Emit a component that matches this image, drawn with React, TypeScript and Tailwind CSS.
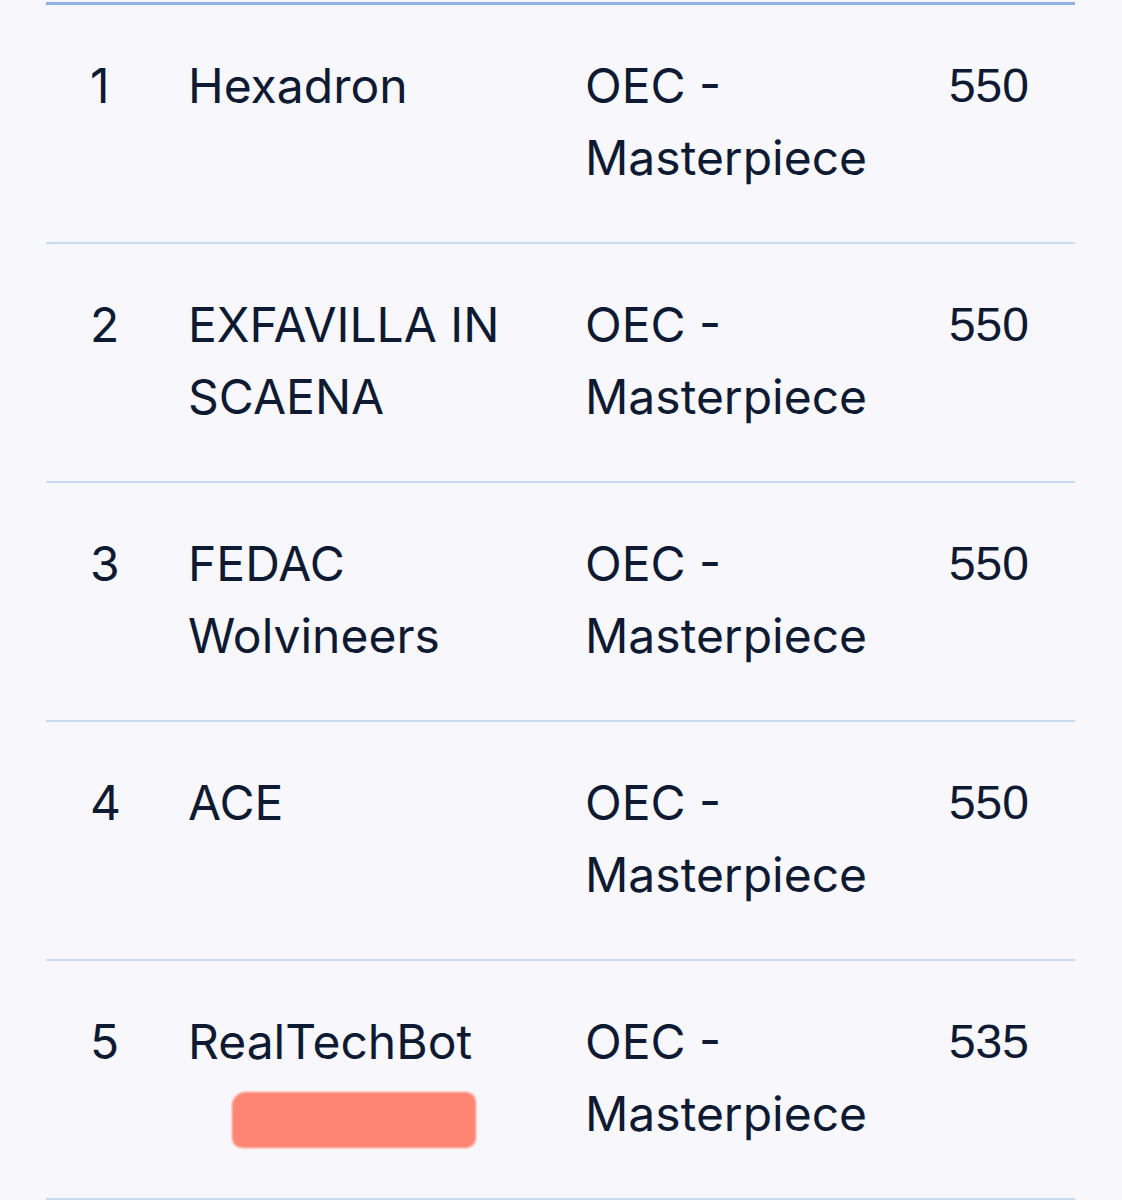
const rows = [
  { rank: 1, team: "Hexadron", category: "OEC - Masterpiece", score: 550 },
  { rank: 2, team: "EXFAVILLA IN SCAENA", category: "OEC - Masterpiece", score: 550 },
  { rank: 3, team: "FEDAC Wolvineers", category: "OEC - Masterpiece", score: 550 },
  { rank: 4, team: "ACE", category: "OEC - Masterpiece", score: 550 },
  { rank: 5, team: "RealTechBot", category: "OEC - Masterpiece", score: 535, marked: true },
];

export default function App() {
  return (
    <div className="min-h-[1200px] w-[1122px] bg-[#f7f7fc] overflow-hidden">
      <div className="ml-[46px] mr-[47px] pt-[2px]">
        <div className="border-t-[3px] border-[#8fb2e4]">
          {rows.map((row) => (
            <div
              key={row.rank}
              className="grid grid-cols-[142px_397px_1fr_auto] border-b-2 border-[#c9d9f3] pt-[45px] pb-[48px] text-[48px] leading-[72px] text-[#0e1a32] font-['Inter',sans-serif]"
            >
              <div className="pl-[44px]">{row.rank}</div>
              <div className="relative pr-8">
                {row.team}
                {row.marked && (
                  <div className="absolute left-[44px] top-[86px] w-[244px] h-[56px] rounded-[10px] rounded-tl-[14px] bg-[#fd8571] blur-[1px]" />
                )}
              </div>
              <div className="pr-8">{row.category}</div>
              <div className="pr-[46px] text-right font-['Liberation_Sans',Arial,sans-serif]">
                {row.score}
              </div>
            </div>
          ))}
        </div>
      </div>
    </div>
  );
}
